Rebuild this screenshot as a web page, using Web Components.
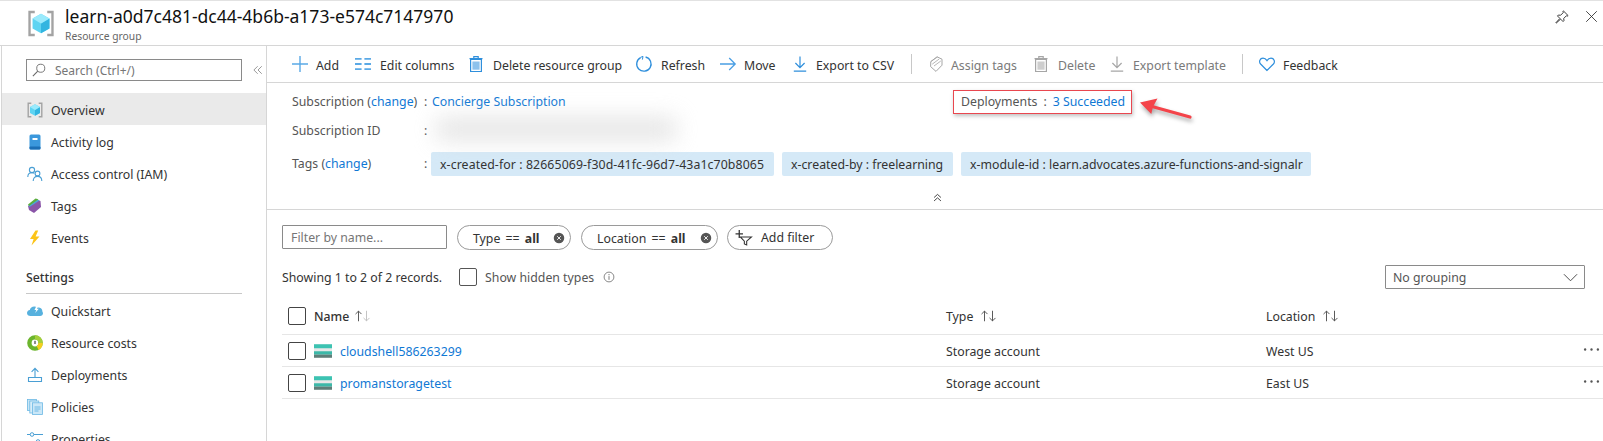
<!DOCTYPE html>
<html lang="en">
<head>
<meta charset="utf-8">
<title>Resource group</title>
<style>
  html, body { margin: 0; height: 441px; overflow: hidden; background: #fff; }
  body { font: 12.3px "Noto Sans", "Open Sans", sans-serif; color: #333; }
</style>
</head>
<body>

<az-blade>
  <az-blade-header slot="header" name="learn-a0d7c481-dc44-4b6b-a173-e574c7147970" kind="Resource group"></az-blade-header>
  <az-sidebar slot="side">
    <az-nav-item icon="group" selected>Overview</az-nav-item>
    <az-nav-item icon="log">Activity log</az-nav-item>
    <az-nav-item icon="people">Access control (IAM)</az-nav-item>
    <az-nav-item icon="tags">Tags</az-nav-item>
    <az-nav-item icon="bolt">Events</az-nav-item>
    <az-nav-heading>Settings</az-nav-heading>
    <az-nav-item icon="cloud">Quickstart</az-nav-item>
    <az-nav-item icon="costs">Resource costs</az-nav-item>
    <az-nav-item icon="deploy">Deployments</az-nav-item>
    <az-nav-item icon="policies">Policies</az-nav-item>
    <az-nav-item icon="sliders">Properties</az-nav-item>
  </az-sidebar>
  <az-toolbar slot="main">
    <az-tool icon="plus" gap="8" width="63">Add</az-tool>
    <az-tool icon="columns" gap="9" width="115">Edit columns</az-tool>
    <az-tool icon="trash" gap="9" nudge width="166">Delete resource group</az-tool>
    <az-tool icon="refresh" gap="9" width="84">Refresh</az-tool>
    <az-tool icon="arrow" gap="8" width="74">Move</az-tool>
    <az-tool icon="download" gap="8" nudge width="117">Export to CSV</az-tool>
    <az-tool-sep></az-tool-sep>
    <az-tool icon="tagoutline" gap="7" nudge width="105" disabled>Assign tags</az-tool>
    <az-tool icon="trash" gap="9" nudge width="76" disabled>Delete</az-tool>
    <az-tool icon="download" gap="8" nudge width="131" disabled>Export template</az-tool>
    <az-tool-sep style="margin-right:16px"></az-tool-sep>
    <az-tool icon="heart" gap="8" width="90">Feedback</az-tool>
  </az-toolbar>
  <az-essentials slot="main"></az-essentials>
  <az-filter-bar slot="main"></az-filter-bar>
  <az-resource-table slot="main">
    <az-resource-row name="cloudshell586263299" type="Storage account" location="West US"></az-resource-row>
    <az-resource-row name="promanstoragetest" type="Storage account" location="East US"></az-resource-row>
  </az-resource-table>
</az-blade>

<script>
(function() {
    'use strict';

    var LINK = '#0f78d4';

    // icons keyed by name, all drawn on a 16 unit box
    var ICONS = {
        group: '<path d="M4.3 1.2H1.2v13.6h3.1M11.7 1.2h3.1v13.6h-3.1" fill="none" stroke="#a3a3a3" stroke-width="1.4"/>' +
               '<path d="M8 2.2l5 2.9v5.8l-5 2.9-5-2.9V5.1z" fill="#5ed4f2"/>' +
               '<path d="M8 8l5-2.9v5.8l-5 2.9z" fill="#32b5e0"/><path d="M8 2.2l5 2.9L8 8 3 5.1z" fill="#9aeafc"/>',
        log: '<rect x="2.5" y="0.5" width="11" height="15" rx="1.5" fill="#3b98dc"/><rect x="2.5" y="12.5" width="11" height="3" rx="1" fill="#1c6fb5"/><rect x="5.5" y="4" width="5" height="2" fill="#fff"/>',
        people: '<g fill="none" stroke="#4a9fd4" stroke-width="1.1"><circle cx="5" cy="4" r="2.6"/><path d="M0.8 11c0-3 1.6-4.4 4.2-4.4 1 0 1.8.2 2.4.6"/><circle cx="10.5" cy="7.5" r="2.4"/><path d="M6.2 15c0-3 1.6-4.6 4.3-4.6s4.3 1.6 4.3 4.6"/></g>',
        tags: '<path d="M1 8L11 2l2.5 1 .5 6-7 6-5-3z" fill="#8a55a8"/><path d="M1.5 7.5L10.5 1.5l2 1-10 6.5z" fill="#4aa6d8"/><path d="M1 6.5L8.5.5l3 .8L2 8z" fill="#5bad3c"/>',
        bolt: '<path d="M8.5 0.5L3 9h3.6L4.5 15.5 12.5 6.5H8.6l2.6-6z" fill="#fcc419"/>',
        cloud: '<path d="M3.4 13C1.5 13 0 11.7 0 10c0-1.6 1.2-2.8 2.8-3C3.3 5 5 3.6 7.2 3.6c1.2 0 2.2.4 3 1.1 2.6-.8 5.2 1 5.2 3.6 0 .2 0 .3 0 .5.4.5.6 1 .6 1.5 0 1.5-1.2 2.7-2.9 2.7z" fill="#57b1de"/><path d="M9.6 2.5L7.5 7h1.8L8.2 10l3.6-4.2H9.9l1.2-3.3z" fill="#fff"/>',
        costs: '<circle cx="8" cy="8" r="5.6" fill="none" stroke="#6cb52d" stroke-width="4.4"/><path d="M8 2.4A5.6 5.6 0 0 1 13.6 8" fill="none" stroke="#a5cf3a" stroke-width="4.4"/><path d="M13.6 8A5.6 5.6 0 0 1 10.6 13" fill="none" stroke="#f3cf1f" stroke-width="4.4"/><rect x="7.4" y="5.8" width="1.2" height="3.2" fill="#444"/>',
        deploy: '<g fill="none" stroke="#4a9fd4" stroke-width="1.1"><path d="M8 10V1.5M4.6 4.8L8 1.4l3.4 3.4"/><path d="M1.5 10.5h13v4h-13z"/></g>',
        policies: '<rect x="0.5" y="0.5" width="9" height="11" fill="#c9e6f6" stroke="#6db8e4" stroke-width=".8"/><rect x="2.8" y="2" width="9" height="12" fill="#d8eef9" stroke="#6db8e4" stroke-width=".8"/><rect x="5.5" y="3.8" width="10" height="11.7" fill="#cbe7f7" stroke="#6db8e4" stroke-width=".8"/><path d="M7.5 8h6M7.5 10h6M7.5 12h4" stroke="#6db8e4" stroke-width="1"/>',
        sliders: '<g fill="#fff" stroke="#4a9fd4" stroke-width="1"><path d="M0 3.5h16M0 10.5h16"/><circle cx="5" cy="3.5" r="1.8"/><circle cx="11" cy="10.5" r="1.8"/></g>',
        plus: '<path d="M8 0v16M0 8h16" stroke="#5aa9e6" stroke-width="1.4" fill="none"/>',
        columns: '<path d="M0 2.8h7M0 8h7M0 13.2h7M10 2.8h7M10 8h7M10 13.2h7" transform="scale(.94 1)" stroke="#5aa9e6" stroke-width="1.8" fill="none"/>',
        trash: '<path d="M2.6 3.5h10.8v12H2.6z" fill="none" stroke="currentColor" stroke-width="1.2"/><rect x="4.4" y="5.5" width="7.2" height="8.2" fill="currentColor" opacity=".55"/><path d="M1.5 2.6h13M5.8 2.4V.7h4.4v1.7" fill="none" stroke="currentColor" stroke-width="1.2"/>',
        refresh: '<path d="M9.6 1A7.2 7.2 0 1 1 4.6 1.6" fill="none" stroke="#2f8fdc" stroke-width="1.3"/><path d="M4.4 1.4L7 .4 6.4 3.6" fill="none" stroke="#2f8fdc" stroke-width="1"/>',
        arrow: '<path d="M0 8h15.2M9.2 2l6 6-6 6" fill="none" stroke="#4a9fe4" stroke-width="1.3"/>',
        download: '<path d="M8 0.5v11M3.4 7L8 11.6 12.6 7M1.8 15.2h12.4" fill="none" stroke="currentColor" stroke-width="1.2"/>',
        tagoutline: '<path d="M9 .8l5 2.4v6L8 15.4l-5.4-4.8.2-5z" fill="none" stroke="currentColor" stroke-width="1"/><path d="M2.8 5.6L9.6 .9M4.2 8.2l7-5.2M6 10l6.8-5" stroke="currentColor" stroke-width=".8" fill="none"/>',
        heart: '<path d="M8 14.5L1.6 8C-.4 5.8.9 2.2 4 2.2c1.7 0 3 .9 4 2.4 1-1.5 2.3-2.4 4-2.4 3.1 0 4.4 3.6 2.4 5.8z" fill="none" stroke="#2f8fdc" stroke-width="1.2"/>',
        search: '<circle cx="10" cy="6" r="4.6" fill="none" stroke="#666" stroke-width="1"/><path d="M6.6 9.4L1 15" stroke="#666" stroke-width="1.2"/>',
        collapse: '<path d="M7.5 3L2.5 8l5 5M13 3L8 8l5 5" fill="none" stroke="#777" stroke-width="1"/>',
        expandup: '<path d="M3 8l5-4.5L13 8M3 13l5-4.5 5 4.5" fill="none" stroke="#333" stroke-width="1.3"/>',
        pin: '<path d="M9.6 1l5.4 5.4-1 .6-1-.4-3 3 .2 2.6-1 1-2.8-2.8L1.4 15l-.4-.4 4.6-5-2.8-2.8 1-1 2.6.2 3-3-.4-1z" fill="none" stroke="#222" stroke-width="1"/>',
        close: '<path d="M1.5 1.5l13 13M14.5 1.5l-13 13" stroke="#222" stroke-width="1" fill="none"/>',
        chevron: '<path d="M1 4.5L8 11.5l7-7" fill="none" stroke="#444" stroke-width="1"/>',
        info: '<circle cx="8" cy="8" r="5.6" fill="none" stroke="#777" stroke-width="1"/><path d="M8 7v4.2M8 4.6v1.4" stroke="#777" stroke-width="1.1"/>',
        clear: '<circle cx="8" cy="8" r="7" fill="#555"/><path d="M5.6 5.6l4.8 4.8M10.4 5.6l-4.8 4.8" stroke="#fff" stroke-width="1.2"/>',
        funnel: '<path d="M5 7.5h10.5l-4.5 4v3.5L8.8 14v-2.5z" fill="none" stroke="#333" stroke-width="1"/><path d="M4 1v7.5M.5 4.5h7" stroke="#333" stroke-width="1.2"/>',
        more: '<circle cx="2" cy="8" r="1.1" fill="#555"/><circle cx="8" cy="8" r="1.1" fill="#555"/><circle cx="14" cy="8" r="1.1" fill="#555"/>',
        storage: '<rect y="0" width="18" height="13.5" fill="#e8e8e8"/><rect y="0" width="18" height="4" fill="#3cc3b2"/><rect y="7" width="18" height="3.4" fill="#3cb8a8"/><rect y="10.4" width="18" height="3.1" fill="#5e7d78"/>',
        sortup: '<path d="M5 14V2.5M1.6 5.8L5 2.4l3.4 3.4" fill="none" stroke="currentColor" stroke-width="1"/>',
        sortdown: '<path d="M5 2v11.5M1.6 10.2L5 13.6l3.4-3.4" fill="none" stroke="currentColor" stroke-width="1"/>'
    };

    function icon(name, w, h) {
        return '<svg xmlns="http://www.w3.org/2000/svg" width="' + w + '" height="' + (h || w) +
            '" viewBox="0 0 ' + (name === 'storage' ? '18 13.5' : name.indexOf('sort') === 0 ? '10 16' : '16 16') +
            '" aria-hidden="true" style="display:block;flex:none;overflow:visible">' + ICONS[name] + '</svg>';
    }

    // small helper so each element below only has to state its shadow markup
    function define(tag, render) {
        customElements.define(tag, class extends HTMLElement {
            constructor() {
                super();
                this.attachShadow({ mode: 'open' });
            }
            connectedCallback() {
                this.shadowRoot.innerHTML = render(this);
            }
        });
    }

    define('az-blade', function() {
        return '<style>' +
            ':host { display: block; width: 1603px; height: 441px; position: relative; overflow: hidden; border-top: 1px solid #e2e2e2; box-sizing: border-box; }' +
            '.body { display: flex; height: 396px; }' +
            '.side { flex: none; width: 266px; box-sizing: border-box; margin-left: 1px; border-left: 1px solid #d6d6d6; border-right: 1px solid #d6d6d6; }' +
            '.main { flex: 1; min-width: 0; }' +
            '</style><slot name="header"></slot><div class="body"><div class="side"><slot name="side"></slot></div>' +
            '<div class="main"><slot name="main"></slot></div></div>';
    });

    define('az-blade-header', function(el) {
        return '<style>' +
            ':host { display: flex; height: 44px; box-sizing: content-box; border-bottom: 1px solid #d6d6d6; padding-left: 27px; align-items: flex-start; }' +
            '.logo { margin-top: 9px; margin-right: 10px; }' +
            '.text { flex: 1; padding-top: 2px; }' +
            '.name { font-size: 17.5px; line-height: 27px; color: #111; }' +
            '.kind { font-size: 10.3px; line-height: 14px; color: #666; margin-top: -1px; }' +
            '.act { display: flex; gap: 16px; padding: 9px 5px 0 0; }' +
            '</style><div class="logo">' + icon('group', 28, 27) + '</div>' +
            '<div class="text"><div class="name">' + el.getAttribute('name') + '</div><div class="kind">' + el.getAttribute('kind') + '</div></div>' +
            '<div class="act">' + icon('pin', 14) + icon('close', 13) + '</div>';
    });

    define('az-sidebar', function() {
        return '<style>' +
            ':host { display: block; }' +
            '.search { display: flex; align-items: center; gap: 10px; padding-top: 12px; padding-left: 24px; height: 24px; margin-bottom: 11px; }' +
            '.box { width: 216px; height: 22px; box-sizing: border-box; border: 1px solid #8a8a8a; display: flex; align-items: center; gap: 9px; padding-left: 5px; color: #767676; font-size: 12px; }' +
            '</style><div class="search"><div class="box">' + icon('search', 14) + '<span>Search (Ctrl+/)</span></div>' + icon('collapse', 12) + '</div><slot></slot>';
    });

    define('az-nav-item', function(el) {
        return '<style>' +
            ':host { display: flex; align-items: center; box-sizing: border-box; height: 32px; padding: 2px 0 0 25px; gap: 8px; color: #333; }' +
            ':host([selected]) { background: #eaeaea; }' +
            '</style>' + icon(el.getAttribute('icon'), 16) + '<slot></slot>';
    });

    define('az-nav-heading', function() {
        return '<style>' +
            ':host { display: block; margin: 14px 24px 0 24px; padding-bottom: 4px; border-bottom: 1px solid #c8c8c8; height: 22px; line-height: 22px; font-weight: 500; color: #333; }' +
            '</style><slot></slot>';
    });

    define('az-toolbar', function() {
        return '<style>' +
            ':host { display: flex; align-items: center; height: 36px; padding-left: 25px; border-bottom: 1px solid #d6d6d6; }' +
            '</style><slot></slot>';
    });

    define('az-tool', function(el) {
        var disabled = el.hasAttribute('disabled');
        return '<style>' +
            ':host { display: flex; align-items: center; flex: none; white-space: nowrap; height: 100%; width: ' + el.getAttribute('width') + 'px; }' +
            ':host { color: ' + (disabled ? '#7a7a7a' : '#333') + '; }' +
            '.ic { color: ' + (disabled ? '#a6a6a6' : '#2f8fdc') + '; margin-left: ' + (el.hasAttribute('nudge') ? '-2px' : '0') + '; }' +
            '.tx { padding-top: 2px; }' +
            '</style><span class="ic">' + icon(el.getAttribute('icon'), 16) + '</span><span class="tx" style="margin-left:' + el.getAttribute('gap') + 'px"><slot></slot></span>';
    });

    define('az-tool-sep', function() {
        return '<style>:host { display: block; width: 1px; height: 20px; background: #c8c8c8; margin: 0 18px 0 0; flex: none; }</style>';
    });

    define('az-tag', function() {
        return '<style>' +
            ':host { display: block; box-sizing: border-box; background: #d5e9f7; border-radius: 2px; height: 24px; line-height: 25px; padding: 0 9px; color: #333; white-space: nowrap; }' +
            '</style><slot></slot>';
    });

    define('az-essentials', function() {
        return '<style>' +
            ':host { display: block; height: 126px; border-bottom: 1px solid #d6d6d6; position: relative; color: #555; }' +
            '.row { display: flex; padding-left: 25px; }' +
            '.label { width: 132px; flex: none; }' +
            '.colon { width: 8px; flex: none; }' +
            'a { color: ' + LINK + '; text-decoration: none; }' +
            '.r1 { height: 34px; align-items: flex-start; padding-top: 7px; line-height: 23px; box-sizing: border-box; }' +
            '.left { width: 661px; display: flex; flex: none; }' +
            '.dep { box-sizing: border-box; width: 179px; height: 24px; border: 1px solid #e9474f; box-shadow: 1px 2px 4px rgba(0,0,0,.25); display: flex; padding-left: 7px; line-height: 21px; background: #fff; }' +
            '.dep span { margin-right: 6px; white-space: nowrap; }' +
            '.r2 { height: 24px; line-height: 28px; }' +
            '.blur { width: 240px; height: 24px; margin-left: 4px; background: #d9d9d9; filter: blur(11px); opacity: .65; }' +
            '.r3 { margin-top: 11px; height: 24px; line-height: 24px; }' +
            '.tags { display: flex; gap: 8px; margin-left: -1px; }' +
            '.up { position: absolute; left: 665px; top: 109px; }' +
            '.arrow { position: absolute; left: 871px; top: 14px; }' +
            '</style>' +
            '<div class="row r1"><div class="left"><span class="label">Subscription (<a>change</a>)</span><span class="colon">:</span><a>Concierge Subscription</a></div>' +
            '<div class="dep"><span>Deployments</span><span>:</span><a>3 Succeeded</a></div></div>' +
            '<div class="row r2"><span class="label">Subscription ID</span><span class="colon">:</span><div class="blur"></div></div>' +
            '<div class="row r3"><span class="label">Tags (<a>change</a>)</span><span class="colon">:</span><div class="tags">' +
            '<az-tag style="width:343px;letter-spacing:.1px">x-created-for : 82665069-f30d-41fc-96d7-43a1c70b8065</az-tag><az-tag style="width:171px">x-created-by : freelearning</az-tag><az-tag style="width:350px">x-module-id : learn.advocates.azure-functions-and-signalr</az-tag></div></div>' +
            '<div class="up">' + icon('expandup', 11) + '</div>' +
            '<svg class="arrow" width="58" height="26" viewBox="0 0 58 26" style="filter:drop-shadow(1px 3px 2px rgba(0,0,0,.35))"><path d="M52 20L14 9.5" stroke="#f4444a" stroke-width="3.2" stroke-linecap="round"/><path d="M2 5.4L19.5 1.5l-4.6 8.4-1.6 7z" fill="#f4444a"/></svg>';
    });

    define('az-filter-pill', function(el) {
        return '<style>' +
            ':host { display: flex; align-items: center; justify-content: space-between; height: 25px; width: ' + el.getAttribute('width') + 'px; box-sizing: border-box; border: 1px solid #9a9a9a; border-radius: 13px; padding: 0 5px 0 15px; color: #333; flex: none; white-space: nowrap; }' +
            'b { font-weight: 700; }' +
            'span { word-spacing: 2px; }' +
            '.tx { padding-top: 1px; }' +
            '</style><span class="tx">' + el.getAttribute('field') + ' == <b>all</b></span><span>' + icon('clear', 12) + '</span>';
    });

    define('az-filter-bar', function() {
        return '<style>' +
            ':host { display: block; padding: 15px 18px 0 15px; }' +
            '.top { display: flex; align-items: flex-start; height: 25px; }' +
            '.name { width: 165px; height: 24px; box-sizing: border-box; border: 1px solid #8a8a8a; padding-left: 8px; line-height: 23px; color: #767676; margin-right: 10px; border-radius: 1px; flex: none; }' +
            'az-filter-pill { margin-right: 10px; }' +
            '.add { display: flex; align-items: center; gap: 9px; width: 106px; height: 25px; box-sizing: border-box; border: 1px solid #9a9a9a; border-radius: 13px; padding: 0 0 0 7px; flex: none; color: #333; margin-left: -1px; }' +
            '.sec { display: flex; align-items: center; height: 24px; margin-top: 15px; }' +
            '.check { width: 18px; height: 18px; box-sizing: border-box; border: 1px solid #555; border-radius: 2px; margin: 0 8px 0 17px; flex: none; }' +
            '.hidden { color: #555; margin-right: 8px; }' +
            '.group { margin-left: auto; width: 200px; height: 24px; box-sizing: border-box; border: 1px solid #8a8a8a; border-radius: 1px; display: flex; align-items: center; justify-content: space-between; padding: 0 6px 0 7px; color: #555; }' +
            '</style>' +
            '<div class="top"><div class="name">Filter by name...</div><az-filter-pill field="Type" width="114"></az-filter-pill><az-filter-pill field="Location" width="137"></az-filter-pill>' +
            '<div class="add">' + icon('funnel', 17) + '<span>Add filter</span></div></div>' +
            '<div class="sec"><span>Showing 1 to 2 of 2 records.</span><span class="check"></span><span class="hidden">Show hidden types</span>' + icon('info', 14) +
            '<div class="group"><span>No grouping</span>' + icon('chevron', 15) + '</div></div>';
    });

    define('az-sort-arrows', function(el) {
        return '<style>' +
            ':host { display: inline-flex; margin-left: ' + (el.hasAttribute('muted') ? '5px' : '7px') + '; flex: none; color: #444; }' +
            '.off { color: ' + (el.hasAttribute('muted') ? '#bbb' : '#444') + '; margin-left: -1px; }' +
            '</style>' + icon('sortup', 9, 14) + '<span class="off">' + icon('sortdown', 9, 14) + '</span>';
    });

    var COLS = 'display: grid; grid-template-columns: 32px 632px 320px 317px 1fr; align-items: center;';

    define('az-resource-table', function() {
        return '<style>' +
            ':host { display: block; margin: 12px 0 0 15px; }' +
            '.head { ' + COLS + ' height: 30px; padding-bottom: 3px; border-bottom: 1px solid #e6e6e6; color: #333; }' +
            '.cell { display: flex; align-items: center; }' +
            '.check { width: 18px; height: 18px; box-sizing: border-box; border: 1px solid #444; border-radius: 2px; margin-left: 6px; }' +
            '.name { font-weight: 500; }' +
            '</style>' +
            '<div class="head"><span class="check"></span><div class="cell name">Name<az-sort-arrows muted></az-sort-arrows></div>' +
            '<div class="cell">Type<az-sort-arrows></az-sort-arrows></div><div class="cell">Location<az-sort-arrows></az-sort-arrows></div><span></span></div><slot></slot>';
    });

    define('az-resource-row', function(el) {
        return '<style>' +
            ':host { ' + COLS + ' height: 31px; border-bottom: 1px solid #e6e6e6; color: #333; }' +
            '.check { width: 18px; height: 18px; box-sizing: border-box; border: 1px solid #444; border-radius: 2px; margin-left: 6px; }' +
            '.cell { display: flex; align-items: center; }' +
            'a { color: ' + LINK + '; margin-left: 8px; padding-top: 2px; }' +
            '.tx { padding-top: 2px; }' +
            '.more { margin-top: -2px; }' +
            '</style><span class="check"></span><div class="cell">' + icon('storage', 18, 14) + '<a>' + el.getAttribute('name') + '</a></div>' +
            '<div class="tx">' + el.getAttribute('type') + '</div><div class="tx">' + el.getAttribute('location') + '</div><div class="more">' + icon('more', 17) + '</div>';
    });
})();
</script>
</body>
</html>
